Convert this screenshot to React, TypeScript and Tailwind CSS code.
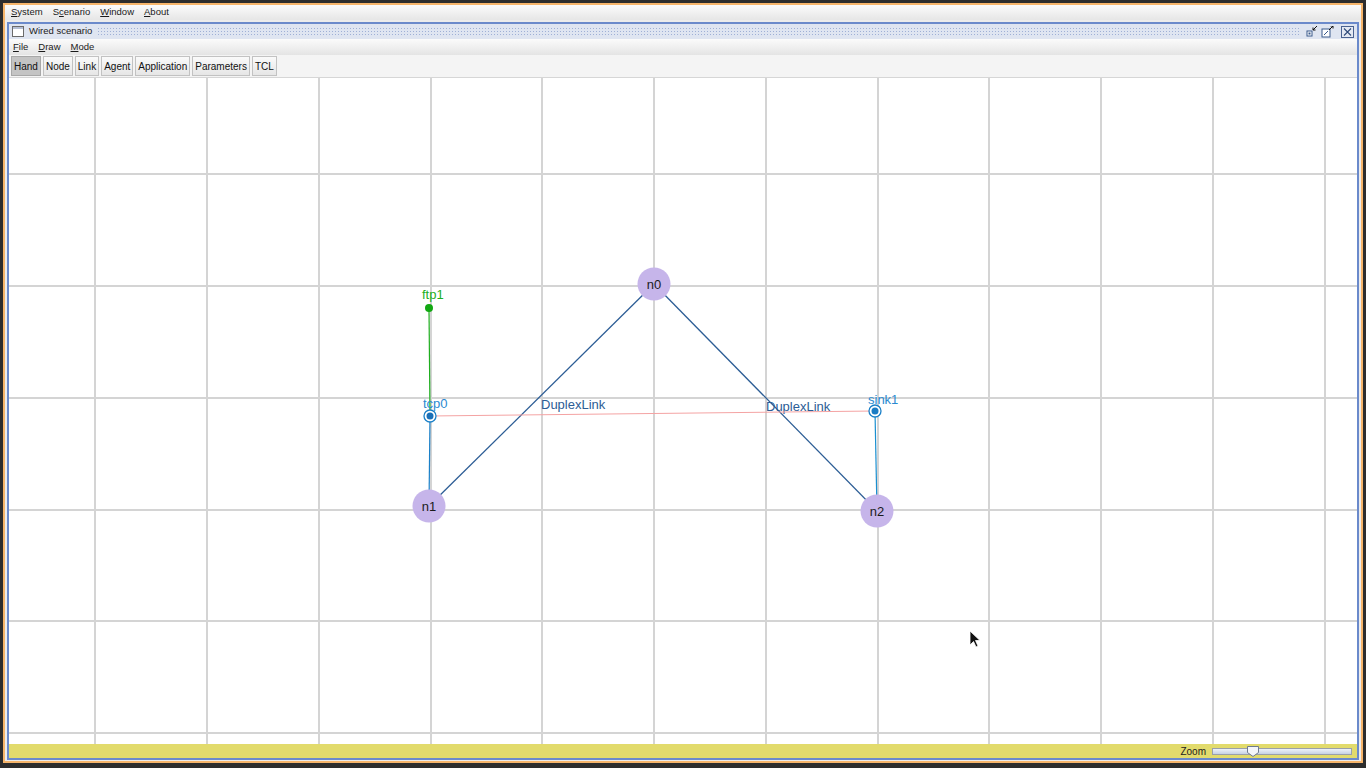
import React from 'react';

const XS = [95, 207, 319, 431, 542, 654, 766, 878, 989, 1101, 1213, 1325];
const YS = [174, 286, 398, 510, 621, 733];

const NODES = [
  { id: 'n0', x: 654, y: 284 },
  { id: 'n1', x: 429, y: 506 },
  { id: 'n2', x: 877, y: 511 },
];

const TOOLS = ['Hand', 'Node', 'Link', 'Agent', 'Application', 'Parameters', 'TCL'];

function Mn({ pre = '', u, rest }: { pre?: string; u: string; rest: string }) {
  return (
    <span>
      {pre}
      <span className="underline underline-offset-1">{u}</span>
      {rest}
    </span>
  );
}

function Canvas() {
  return (
    <svg width="1348" height="666" className="block" style={{ fontFamily: '"Liberation Sans", Arial, sans-serif' }}>
      <g transform="translate(-9 -78)">
        <rect x="9" y="78" width="1348" height="666" fill="#ffffff" />
        {XS.map((x) => (
          <line key={x} x1={x} y1={78} x2={x} y2={744} stroke="#d4d4d4" strokeWidth="2" />
        ))}
        {YS.map((y) => (
          <line key={y} x1={9} y1={y} x2={1357} y2={y} stroke="#d4d4d4" strokeWidth="2" />
        ))}

        {/* links */}
        <line x1="654" y1="284" x2="429" y2="506" stroke="#2c5d95" strokeWidth="1.3" />
        <line x1="654" y1="284" x2="877" y2="511" stroke="#2c5d95" strokeWidth="1.3" />
        <text x="541" y="409" fontSize="13" fill="#2c5d95">DuplexLink</text>
        <text x="766" y="411" fontSize="13" fill="#2c5d95">DuplexLink</text>

        {/* agents */}
        <line x1="430" y1="416" x2="875" y2="411" stroke="#f4a3a3" strokeWidth="1" />
        <line x1="429" y1="308" x2="430" y2="416" stroke="#1eae1e" strokeWidth="1.2" />
        <line x1="430" y1="416" x2="429" y2="506" stroke="#1a80c8" strokeWidth="1.2" />
        <line x1="875" y1="411" x2="877" y2="511" stroke="#1a8fd0" strokeWidth="1.2" />

        <circle cx="429" cy="308" r="4" fill="#12a812" />
        <text x="422" y="299" fontSize="13" fill="#1cb01c">ftp1</text>

        <circle cx="430" cy="416" r="6" fill="#ffffff" stroke="#1a80c8" strokeWidth="1.3" />
        <circle cx="430" cy="416" r="3.5" fill="#1a70b8" />
        <text x="423" y="408" fontSize="13" fill="#2a8ad0">tcp0</text>

        <circle cx="875" cy="411" r="6" fill="#ffffff" stroke="#1a80c8" strokeWidth="1.3" />
        <circle cx="875" cy="411" r="3.5" fill="#1a7cc4" />
        <text x="868" y="404" fontSize="13" fill="#2a8ad0">sink1</text>

        {NODES.map((n) => (
          <g key={n.id}>
            <circle cx={n.x} cy={n.y} r="16.5" fill="#c6b5ea" />
            <text x={n.x} y={n.y + 5} fontSize="13" fill="#1a1a1a" textAnchor="middle">
              {n.id}
            </text>
          </g>
        ))}

        {/* mouse pointer */}
        <path
          d="M970 631 L970 645 L973.5 641.5 L976 647 L978 646 L975.5 640.5 L980 640.5 Z"
          fill="#111111"
          stroke="#ffffff"
          strokeWidth="0.8"
        />
      </g>
    </svg>
  );
}

export default function App() {
  return (
    <div
      className="h-[768px] w-[1366px] overflow-hidden bg-[#2d2d2d] px-[3px] pt-[3px] pb-[5px] text-[10px] text-[#1a1a1a]"
      style={{ fontFamily: '"Liberation Sans", Arial, sans-serif' }}
    >
      <div className="flex h-full flex-col border-2 border-[#f6b56b] bg-[#ececec]">
        {/* app menubar */}
        <div className="flex h-[15px] items-center gap-[10px] bg-gradient-to-b from-[#fbfbfb] to-[#e6e6e6] pl-[6px] text-[9.5px]">
          <Mn u="S" rest="ystem" />
          <Mn pre="S" u="c" rest="enario" />
          <Mn u="W" rest="indow" />
          <Mn u="A" rest="bout" />
        </div>

        {/* internal frame */}
        <div className="mx-[2px] mt-[2px] mb-[1px] flex flex-1 flex-col border-2 border-[#6b8acb] bg-[#eeeeee]">
          <div className="flex h-[15px] items-center bg-[#dfe5f1] pl-[3px] pr-[3px]">
            <svg width="12" height="11" className="mr-[5px]">
              <rect x="0.5" y="0.5" width="11" height="10" fill="#ffffff" stroke="#6b6b6b" />
              <rect x="1" y="1" width="10" height="2" fill="#b5bfd4" />
            </svg>
            <span className="text-[9.5px] text-[#222]">Wired scenario</span>
            <div className="mx-[5px] h-[10px] flex-1 bg-[radial-gradient(circle,#9fb0d6_0.7px,transparent_0.9px)] bg-[length:3px_3px]" />
            <div className="flex items-center gap-[3px]">
              <svg width="12" height="11">
                <rect x="1" y="5" width="5" height="5" fill="#ffffff" stroke="#3a5a8c" />
                <rect x="2.5" y="6.5" width="2" height="2" fill="#3a5a8c" />
                <path d="M7 4 L11 0 M7 4 L7 1.5 M7 4 L9.5 4" stroke="#111" strokeWidth="1" fill="none" />
              </svg>
              <svg width="13" height="12">
                <rect x="1" y="3" width="8" height="8" fill="#ffffff" stroke="#3a5a8c" />
                <path d="M3 9 L7 5" stroke="#3a5a8c" />
                <path d="M8 4 L12 0 M12 0 L9.5 0 M12 0 L12 2.5" stroke="#111" strokeWidth="1" fill="none" />
              </svg>
              <svg width="13" height="12" className="ml-[4px]">
                <rect x="0.5" y="0.5" width="12" height="11" fill="#e4e9f3" stroke="#4a6290" />
                <path d="M3 2.5 L10 9.5 M10 2.5 L3 9.5" stroke="#2f4a7a" strokeWidth="1.1" />
              </svg>
            </div>
          </div>

          {/* frame menubar */}
          <div className="flex h-[16px] items-center gap-[10px] bg-gradient-to-b from-[#fbfbfb] to-[#e4e4e4] pl-[4px] text-[9.5px]">
            <Mn u="F" rest="ile" />
            <Mn u="D" rest="raw" />
            <Mn u="M" rest="ode" />
          </div>

          {/* toolbar */}
          <div className="flex h-[23px] items-center gap-[2px] border-b border-[#d6d6d6] bg-[#f4f4f4] pl-[2px]">
            {TOOLS.map((t, i) => (
              <div
                key={t}
                className={
                  i === 0
                    ? 'flex h-[20px] items-center border border-[#a8a8a8] bg-[#c4c4c4] px-[2px] text-[10px] text-[#111]'
                    : 'flex h-[20px] items-center border border-[#c2c2c2] bg-gradient-to-b from-[#fafafa] to-[#e6e6e6] px-[2px] text-[10px] text-[#111]'
                }
              >
                {t}
              </div>
            ))}
          </div>

          {/* canvas */}
          <div className="flex-1 overflow-hidden bg-white">
            <Canvas />
          </div>

          {/* status bar */}
          <div className="flex h-[14px] items-center justify-end bg-[#e2db6c] pr-[5px]">
            <span className="mr-[6px] text-[10px] text-[#222]">Zoom</span>
            <div className="relative h-[7px] w-[140px] border border-[#9aa0aa] bg-gradient-to-b from-[#eef2f8] to-[#c6d2e4]">
              <svg width="12" height="11" className="absolute left-[34px] top-[-3px]">
                <path d="M0.5 0.5 H11.5 V6.5 L6 10.5 L0.5 6.5 Z" fill="#f4f6fa" stroke="#6f7b8e" />
              </svg>
            </div>
          </div>
        </div>
      </div>
    </div>
  );
}
